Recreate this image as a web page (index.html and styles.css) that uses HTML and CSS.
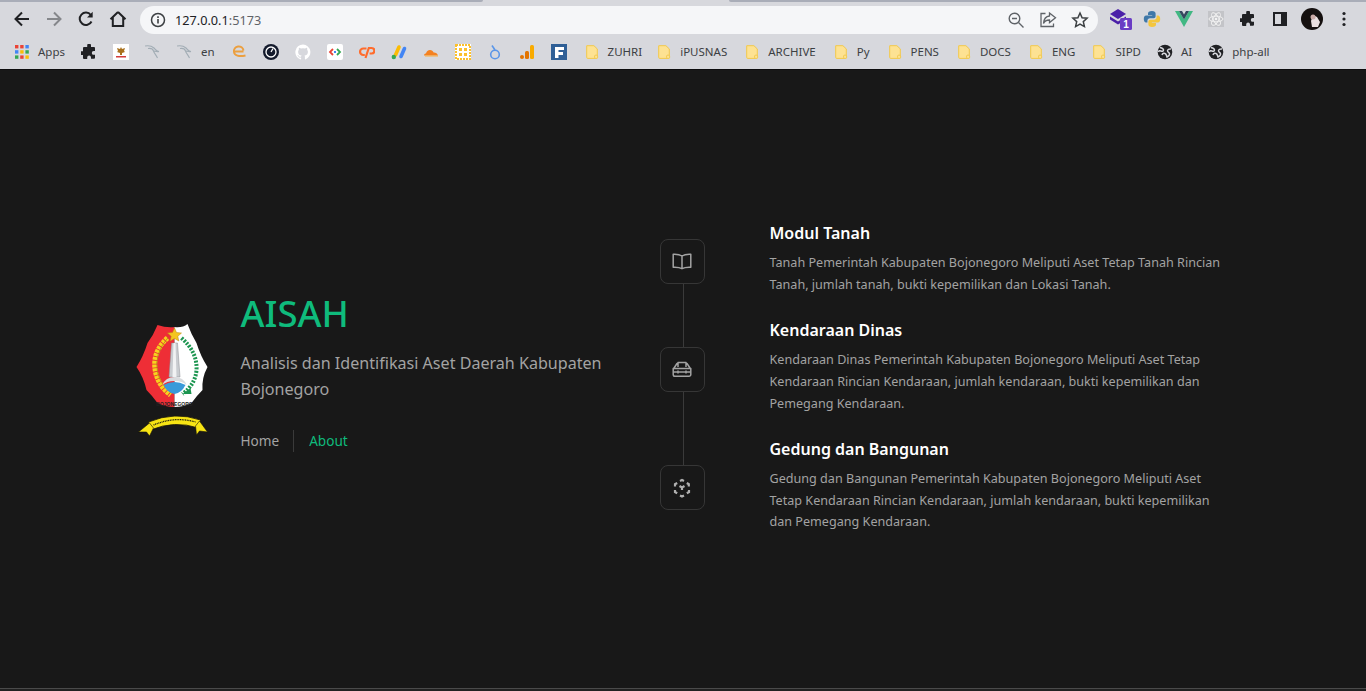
FILE: index.html
```html
<!DOCTYPE html>
<html lang="en">
<head>
  <meta charset="UTF-8">
  <title>AISAH</title>
  <link rel="stylesheet" href="styles.css">
</head>
<body>
  <svg class="defs" width="0" height="0">
    <symbol id="folder" viewBox="0 0 16 16">
      <path d="M2.7 1.7h7.2l3.4 3.200v8.500a1 1 0 0 1-1 1H3.700a1 1 0 0 1-1-1z" fill="#fde293" stroke="#f2c94c" stroke-width="1"/>
      <rect x="10.600" y="11.200" width="3" height="3.200" rx="1" fill="#fde293" stroke="#f2c94c"/>
    </symbol>
    <symbol id="globe" viewBox="0 0 16 16">
      <circle cx="8" cy="8" r="7.300" fill="#202124"/>
      <path d="M3 3.500c2 .5 3.500 1 3.500 2.500S5 7.500 4 7 1.800 6.500 1.500 8M14 5c-2-.3-3.500.5-3.500 1.800s1.500 1.500 2 2.700-1 3-2.500 3.500c-.5-1.500-.5-3-2-3.500s-2.500 0-3 1.500" fill="none" stroke="#d7d8dd" stroke-width="1.500"/>
    </symbol>
    <symbol id="kali" viewBox="0 0 16 16">
      <path d="M0 2c4-.8 7 .2 9 2 1.500 1.500 2 3.500 5 3.500M3 4.500c3-.5 5 .5 5.500 2.500.5 2 2 3 4 7M9 7c2 .5 3 1 5 .5" fill="none" stroke="#a2adb5" stroke-width="1.100"/>
    </symbol>
    <symbol id="puzzle" viewBox="0 0 16 16">
      <path d="M6.200 1.500a1.900 1.900 0 0 1 3.800 0V3h3a1 1 0 0 1 1 1v3h-1.300a1.900 1.900 0 0 0 0 3.800H14v3a1 1 0 0 1-1 1h-3v-1.300a1.900 1.900 0 0 0-3.800 0V15H3a1 1 0 0 1-1-1v-3H.7a1.900 1.900 0 0 1 0-3.800H2V4a1 1 0 0 1 1-1h3.200z" fill="#202124"/>
    </symbol>
  </svg>

  <div class="tabstrip">
    <span class="tab-gap tab-gap-left"></span>
    <span class="tab-active"></span>
    <span class="tab-gap tab-gap-right"></span>
  </div>

  <div class="toolbar">
    <div class="nav-buttons">
      <span class="tool">
        <svg width="18" height="18" viewBox="0 0 18 18"><path d="M16 9H3M9 2.500 2.500 9 9 15.500" fill="none" stroke="#202124" stroke-width="2"/></svg>
      </span>
      <span class="tool">
        <svg width="18" height="18" viewBox="0 0 18 18"><path d="M2 9h13M9 2.500 15.500 9 9 15.500" fill="none" stroke="#85878b" stroke-width="2"/></svg>
      </span>
      <span class="tool">
        <svg width="18" height="18" viewBox="0 0 18 18"><path d="M14.500 11.500A6.200 6.200 0 1 1 13.800 5" fill="none" stroke="#202124" stroke-width="2"/><path d="M15.700 1.800v5.700h-5.700z" fill="#202124"/></svg>
      </span>
      <span class="tool">
        <svg width="18" height="18" viewBox="0 0 18 18"><path d="M9 2 1.500 9.200M9 2l7.500 7.200M3.800 7.500V16h10.400V7.500" fill="none" stroke="#202124" stroke-width="2"/></svg>
      </span>
    </div>

    <div class="omnibox">
      <svg class="omni-info" width="16" height="16" viewBox="0 0 16 16"><circle cx="8" cy="8" r="6.500" fill="none" stroke="#3c4043" stroke-width="1.500"/><path d="M7.200 7h1.600v4.500H7.200zM7.200 4.300h1.600v1.600H7.200z" fill="#3c4043"/></svg>
      <span class="omni-url">127.0.0.1<span class="omni-port">:5173</span></span>
      <span class="omni-actions">
        <svg width="18" height="18" viewBox="0 0 18 18"><circle cx="7.500" cy="7.500" r="5.300" fill="none" stroke="#5f6368" stroke-width="1.400"/><path d="M5 7.500h5M11.500 11.500l5 5" fill="none" stroke="#5f6368" stroke-width="1.400"/></svg>
        <svg width="18" height="18" viewBox="0 0 18 18"><path d="M6.500 2.500H2v13h12.500v-3M10.500 2l6 4.800-6 4.800V9C7.500 9 5.500 10 4.500 12.500 4.800 8.500 7 5.300 10.500 5z" fill="none" stroke="#5f6368" stroke-width="1.300"/></svg>
        <svg width="18" height="18" viewBox="0 0 18 18"><path d="m9 2 2.100 4.700 5 .5-3.800 3.400 1.100 5L9 13l-4.400 2.600 1.100-5-3.800-3.400 5-.5z" fill="none" stroke="#3c4043" stroke-width="1.500"/></svg>
      </span>
    </div>

    <div class="extensions">
      <span class="tool">
        <svg class="ext-stack" width="24" height="24" viewBox="0 0 24 24">
          <path d="M8 2l8 5-8 5-8-5z" fill="#4a1fa8"/><path d="M0 9.500l8 5 8-5v3l-8 5-8-5z" fill="#4a1fa8"/>
          <rect x="10" y="11" width="12" height="12" rx="1.500" fill="#6a3cc4"/>
          <text x="16" y="21" class="ext-badge">1</text>
        </svg>
      </span>
      <span class="tool">
        <svg width="18" height="18" viewBox="0 0 18 18">
          <path d="M9 1C6 1 5 2 5 3.500V5h4.200v.6H3.200C1.500 5.600.8 7 .8 9s.9 3.400 2.200 3.400h1.400v-1.700C4.400 9.200 5.500 8.200 7 8.200h3.600c1.200 0 2-.9 2-2V3.500C12.600 2 11.400 1 9 1z" fill="#3f78a8"/>
          <path d="M9 17c3 0 4-1 4-2.500V13H8.800v-.6h6c1.700 0 2.400-1.400 2.400-3.400s-.9-3.400-2.200-3.400h-1.400v1.700c0 1.500-1.100 2.500-2.600 2.500H7.400c-1.200 0-2 .9-2 2v2.700C5.400 16 6.600 17 9 17z" fill="#f4c63d"/>
        </svg>
      </span>
      <span class="tool">
        <svg width="18" height="16" viewBox="0 0 18 16"><path d="M0 0h4l5 8.500L14 0h4L9 16z" fill="#41b883"/><path d="M4 0h3l2 3.500L11 0h3L9 8.500z" fill="#35495e"/></svg>
      </span>
      <span class="tool">
        <span class="ext-react">
          <svg width="16" height="16" viewBox="0 0 16 16"><g fill="none" stroke="#f3f3f3" stroke-width=".9"><ellipse cx="8" cy="8" rx="7" ry="2.800"/><ellipse cx="8" cy="8" rx="7" ry="2.800" transform="rotate(60 8 8)"/><ellipse cx="8" cy="8" rx="7" ry="2.800" transform="rotate(120 8 8)"/></g><circle cx="8" cy="8" r="1.300" fill="#f3f3f3"/></svg>
        </span>
      </span>
      <span class="tool"><svg width="16" height="16"><use href="#puzzle"/></svg></span>
      <span class="tool">
        <svg width="14" height="14" viewBox="0 0 14 14"><rect x="1" y="1" width="12" height="12" fill="none" stroke="#202124" stroke-width="2"/><rect x="8" y="1" width="5" height="12" fill="#202124"/></svg>
      </span>
      <span class="tool">
        <span class="avatar">
          <svg width="22" height="22" viewBox="0 0 22 22"><path d="M12 7l4 2 3 5-2 5h-6l-1-6z" fill="#e9dfe0"/><circle cx="12" cy="9" r="2.500" fill="#c9a9a5"/></svg>
        </span>
      </span>
      <span class="tool">
        <svg width="4" height="16" viewBox="0 0 4 16"><circle cx="2" cy="2.500" r="1.600" fill="#202124"/><circle cx="2" cy="8" r="1.600" fill="#202124"/><circle cx="2" cy="13.500" r="1.600" fill="#202124"/></svg>
      </span>
    </div>
  </div>

  <div class="bookmarks">
    <a class="bm bm-apps">
      <svg width="14" height="14" viewBox="0 0 14 14">
        <g fill="#ea4335"><rect width="3.400" height="3.400"/><rect x="5.200" width="3.400" height="3.400"/></g>
        <rect x="10.400" width="3.400" height="3.400" fill="#4285f4"/>
        <rect y="5.200" width="3.400" height="3.400" fill="#4285f4"/><rect x="5.200" y="5.200" width="3.400" height="3.400" fill="#fbbc04"/><rect x="10.400" y="5.200" width="3.400" height="3.400" fill="#34a853"/>
        <rect y="10.400" width="3.400" height="3.400" fill="#34a853"/><rect x="5.200" y="10.400" width="3.400" height="3.400" fill="#ea4335"/><rect x="10.400" y="10.400" width="3.400" height="3.400" fill="#fbbc04"/>
      </svg>
      <span>Apps</span>
    </a>
    <a class="bm"><svg width="16" height="16"><use href="#puzzle"/></svg></a>
    <a class="bm">
      <svg width="16" height="16" viewBox="0 0 16 16"><rect width="16" height="16" fill="#fff"/><path d="M8 3l1 2 3-1-1 3 1 1-3 1v2H7V9L4 8l1-1-1-3 3 1z" fill="#a8701c"/><rect x="3" y="12" width="10" height="1.500" fill="#d33b3b"/></svg>
    </a>
    <a class="bm"><svg width="16" height="16"><use href="#kali"/></svg></a>
    <a class="bm"><svg width="16" height="16"><use href="#kali"/></svg><span>en</span></a>
    <a class="bm">
      <svg width="16" height="16" viewBox="0 0 16 16"><path d="M3 7.500h9.500M3 8a4.500 4.500 0 0 1 9.500-1.500M3 8c.3 3.500 5 5 11.500 3.500" fill="none" stroke="#eb9f3f" stroke-width="2"/></svg>
    </a>
    <a class="bm">
      <svg width="16" height="16" viewBox="0 0 16 16"><circle cx="8" cy="8" r="8" fill="#131a2c"/><circle cx="8" cy="8" r="5" fill="none" stroke="#fff" stroke-width="1.300"/><path d="M8 8l2-3.500" stroke="#fff" stroke-width="1.300"/></svg>
    </a>
    <a class="bm">
      <svg width="16" height="16" viewBox="0 0 16 16"><path d="M8 .5a7.700 7.700 0 0 0-2.400 15c.4 0 .5-.2.500-.4v-1.500c-2.100.5-2.600-.9-2.600-.9-.3-.9-.8-1.100-.8-1.100-.7-.5 0-.5 0-.5.800 0 1.200.8 1.200.8.700 1.200 1.800.9 2.200.7 0-.5.300-.9.500-1.100-1.700-.2-3.500-.9-3.500-3.800 0-.8.300-1.500.8-2-.1-.2-.3-1 .1-2 0 0 .6-.2 2.100.8a7 7 0 0 1 3.800 0c1.500-1 2.100-.8 2.100-.8.400 1 .2 1.800.1 2 .5.500.8 1.200.8 2 0 2.900-1.800 3.600-3.500 3.800.3.200.5.700.5 1.400v2.100c0 .2.100.5.500.4A7.700 7.700 0 0 0 8 .5z" fill="#fff"/></svg>
    </a>
    <a class="bm">
      <svg width="16" height="16" viewBox="0 0 16 16"><rect width="16" height="16" rx="2" fill="#fff"/><path d="M6 5 3 8l3 3" fill="none" stroke="#ea4335" stroke-width="1.800"/><path d="m10 5 3 3-3 3" fill="none" stroke="#34a853" stroke-width="1.800"/><path d="M7 8h2" stroke="#4285f4" stroke-width="1.800"/></svg>
    </a>
    <a class="bm">
      <svg width="16" height="16" viewBox="0 0 16 16" fill="none" stroke="#ff6c2c" stroke-width="2.200"><path d="M7.500 4.500H4.300a3 3 0 0 0 0 6.500h1.500"/><path d="M6.500 14 9.800 4h2.800a2.700 2.700 0 0 1 0 5.500h-2"/></svg>
    </a>
    <a class="bm">
      <svg width="16" height="16" viewBox="0 0 16 16" stroke-width="3.600" stroke-linecap="round"><path d="M8 3 4.500 11" stroke="#fbbc04"/><path d="M13.500 4.500 10 12.500" stroke="#4285f4"/><circle cx="2.800" cy="13" r="2.200" fill="#34a853" stroke="none"/></svg>
    </a>
    <a class="bm">
      <svg width="16" height="16" viewBox="0 0 16 16"><path d="M1 11.500c0-1.500 1-2 2-2 .5-2 2-3.500 4-3.500 1.800 0 3 1 3.600 2.500 1.800-.2 3.900.8 4.400 3z" fill="#f48120"/><path d="M2 12h13" stroke="#fbad41" stroke-width="1"/></svg>
    </a>
    <a class="bm">
      <svg width="16" height="16" viewBox="0 0 16 16"><rect width="16" height="16" fill="#fff"/><rect x="1" y="1" width="14" height="14" fill="none" stroke="#fbc02d" stroke-width="2" stroke-dasharray="2 1"/><path d="M4 4h3v3H4zM9 4h3v3H9zM4 9h3v3H4zM9 9h3v3H9z" fill="#fbc02d"/></svg>
    </a>
    <a class="bm">
      <svg width="16" height="16" viewBox="0 0 16 16"><circle cx="8" cy="10.500" r="4.300" fill="none" stroke="#5b96e8" stroke-width="1.600"/><path d="M5 1.500l3 4.500" stroke="#5b96e8" stroke-width="1.600" fill="none"/></svg>
    </a>
    <a class="bm">
      <svg width="16" height="16" viewBox="0 0 16 16"><rect x="11" y="1" width="4" height="14" rx="1.500" fill="#f9ab00"/><rect x="6" y="7" width="4" height="8" rx="1.500" fill="#e37400"/><circle cx="3" cy="13" r="2" fill="#e37400"/></svg>
    </a>
    <a class="bm">
      <svg width="16" height="16" viewBox="0 0 16 16"><rect width="16" height="16" fill="#2f5f96"/><path d="M4 3h9v3H7.500v2H12v3H7.500v3H4z" fill="#fff"/></svg>
    </a>
    <a class="bm bm-folder bm-folder-first"><svg width="16" height="16"><use href="#folder"/></svg><span>ZUHRI</span></a>
    <a class="bm bm-folder"><svg width="16" height="16"><use href="#folder"/></svg><span>iPUSNAS</span></a>
    <a class="bm bm-folder"><svg width="16" height="16"><use href="#folder"/></svg><span>ARCHIVE</span></a>
    <a class="bm bm-folder"><svg width="16" height="16"><use href="#folder"/></svg><span>Py</span></a>
    <a class="bm bm-folder"><svg width="16" height="16"><use href="#folder"/></svg><span>PENS</span></a>
    <a class="bm bm-folder"><svg width="16" height="16"><use href="#folder"/></svg><span>DOCS</span></a>
    <a class="bm bm-folder bm-folder-eng"><svg width="16" height="16"><use href="#folder"/></svg><span>ENG</span></a>
    <a class="bm bm-folder bm-folder-last"><svg width="16" height="16"><use href="#folder"/></svg><span>SIPD</span></a>
    <a class="bm"><svg width="16" height="16"><use href="#globe"/></svg><span>AI</span></a>
    <a class="bm"><svg width="16" height="16"><use href="#globe"/></svg><span>php-all</span></a>
  </div>

  <main class="page">
    <div class="content">
      <section class="intro">
        <svg class="logo" width="73" height="115" viewBox="12 12 72 115">
          <path d="M33 15Q42 18 50 17V97Q41 97 33 93Q28 86 22 80Q19 67 12 57Q19 46 23 33Q29 25 33 15z" fill="#ee2e36"/>
          <path d="M50 17Q58 18 63 14Q67 25 72 33Q76 46 83 57Q77 68 78 80Q72 86 67 93Q59 97 50 97z" fill="#fff"/>
          <path d="M43 28Q27 42 31 62Q34 76 46 85" fill="none" stroke="#f7d21e" stroke-width="5" stroke-dasharray="3 .8"/>
          <path d="M44 27Q29 44 33 62Q36 75 47 83" fill="none" stroke="#a87d12" stroke-width=".7"/>
          <path d="M57 28Q73 42 72 60Q71 74 58 84" fill="none" stroke="#1c9550" stroke-width="4" stroke-dasharray="2 1.400"/>
          <path d="M50 18l2 4.500 5 .5-3.700 3.300 1 4.700-4.300-2.500-4.300 2.500 1-4.700-3.700-3.300 5-.5z" fill="#f4c51f" stroke="#b78a14" stroke-width=".5"/>
          <path d="M47 33h6l2.500 34h-11z" fill="#c9ccd0" stroke="#8a8d92" stroke-width=".5"/>
          <path d="M49 33h2l1 34h-4z" fill="#f1f2f3"/>
          <path d="M38 75Q41 67 50 67Q59 67 62 75Q58 71 50 71Q42 71 38 75z" fill="#d9dbde"/>
          <path d="M39 75Q50 69 61 75Q57 83 50 84Q43 83 39 75z" fill="#3a9ad9"/>
          <path d="M58 84l8-6 1 6z" fill="#1c9550"/>
          <text x="50" y="96" class="logo-name">BOJONEGORO</text>
          <path d="M24 112Q50 101 76 110L74 118Q50 110 26 120z" fill="#f7e414" stroke="#16130a" stroke-width=".8"/>
          <path d="M25 113L14 122 22 122 25 126 29 118zM75 111L83 122 75 121 72 125 71 116z" fill="#f7e414" stroke="#16130a" stroke-width=".6"/>
          <path d="M29 115Q50 106 71 112" fill="none" stroke="#1b1a10" stroke-width="1.300" stroke-dasharray="1 .7"/>
        </svg>
        <div class="intro-text">
          <h1 class="brand">AISAH</h1>
          <p class="tagline">Analisis dan Identifikasi Aset Daerah Kabupaten Bojonegoro</p>
          <nav class="links">
            <a class="link">Home</a>
            <a class="link link-active">About</a>
          </nav>
        </div>
      </section>

      <section class="features">
        <article class="feature">
          <span class="feature-icon">
            <svg width="22" height="22" viewBox="0 0 22 22" fill="none" stroke="#a3a3a3" stroke-width="1.500" stroke-linejoin="round"><path d="M11 6C9 4.600 6 4 2.200 4.200v13C6 17 9 17.500 11 18.700c2-1.200 5-1.700 8.800-1.500v-13C16 4 13 4.600 11 6zM11 6v12.700"/></svg>
          </span>
          <div class="feature-body">
            <h2>Modul Tanah</h2>
            <p>Tanah Pemerintah Kabupaten Bojonegoro Meliputi Aset Tetap Tanah Rincian Tanah, jumlah tanah, bukti kepemilikan dan Lokasi Tanah.</p>
          </div>
        </article>
        <article class="feature">
          <span class="feature-icon">
            <svg width="22" height="22" viewBox="0 0 22 22" fill="none" stroke="#a3a3a3" stroke-width="1.500" stroke-linejoin="round"><path d="M7 9V4.500h8V9M7 5.500H6L2.700 10.500M15 5.500h1l3.300 5M2.200 10.500h17.600v6a1.800 1.800 0 0 1-1.800 1.800H4a1.800 1.800 0 0 1-1.800-1.800zM2.500 14h17M7 12.500v3M15 12.500v3"/></svg>
          </span>
          <div class="feature-body">
            <h2>Kendaraan Dinas</h2>
            <p>Kendaraan Dinas Pemerintah Kabupaten Bojonegoro Meliputi Aset Tetap Kendaraan Rincian Kendaraan, jumlah kendaraan, bukti kepemilikan dan Pemegang Kendaraan.</p>
          </div>
        </article>
        <article class="feature">
          <span class="feature-icon">
            <svg width="20" height="20" viewBox="0 0 20 20" fill="none" stroke="#b0b0b0" stroke-width="2.200"><path d="M8 3l2-1 2 1M14.800 5l2 1.200v2.300M17 12v2l-2.200 1.200M12 17.500l-2 1-2-1M5.200 15.200 3 14v-2M3 8.500V6.200L5.200 5M7.500 8l2.500 1.500L12.500 8M10 9.500V12"/></svg>
          </span>
          <div class="feature-body">
            <h2>Gedung dan Bangunan</h2>
            <p>Gedung dan Bangunan Pemerintah Kabupaten Bojonegoro Meliputi Aset Tetap Kendaraan Rincian Kendaraan, jumlah kendaraan, bukti kepemilikan dan Pemegang Kendaraan.</p>
          </div>
        </article>
      </section>
    </div>
  </main>
  <div class="page-end"></div>
</body>
</html>
```

FILE: styles.css
```css
* {
  box-sizing: border-box;
}

html, body {
  height: 100%;
  margin: 0;
  overflow: hidden;
}

body {
  display: flex;
  flex-direction: column;
  font-family: "Noto Sans", "Open Sans", sans-serif;
  background-color: #181818;
}

.defs {
  position: absolute;
}

/* browser chrome */
.tabstrip {
  display: flex;
  flex-shrink: 0;
  height: 2px;
  background-color: #d7d8dd;
}

.tab-gap {
  background-color: #a9adb8;
}

.tab-gap-left {
  width: 483px;
  border-bottom-right-radius: 2px;
}

.tab-active {
  width: 246px;
}

.tab-gap-right {
  flex: 1;
  border-bottom-left-radius: 2px;
}

.toolbar {
  display: flex;
  flex-shrink: 0;
  align-items: center;
  height: 33px;
  padding: 0 6px;
  background-color: #d7d8dd;
}

.nav-buttons,
.extensions {
  display: flex;
  align-items: center;
}

.extensions {
  margin-left: 6px;
}

.tool {
  display: flex;
  align-items: center;
  justify-content: center;
  width: 32px;
  height: 28px;
}

.ext-stack {
  margin-left: 4px;
}

.ext-badge {
  font: bold 10px "Liberation Sans", sans-serif;
  fill: #fff;
  text-anchor: middle;
}

.ext-react {
  display: flex;
  align-items: center;
  justify-content: center;
  width: 16px;
  height: 16px;
  background-color: #c3c4c8;
}

.avatar {
  display: block;
  width: 22px;
  height: 22px;
  border-radius: 50%;
  background-color: #15100f;
  overflow: hidden;
}

.omnibox {
  display: flex;
  align-items: center;
  flex: 1;
  height: 28px;
  margin-left: 6px;
  margin-top: 2px;
  padding-left: 10px;
  border-radius: 14px;
  background-color: #f5f6f8;
}

.omni-url {
  margin-left: 9px;
  font-size: 12.7px;
  color: #202124;
}

.omni-port {
  color: #5f6368;
}

.omni-actions {
  display: flex;
  gap: 14px;
  margin-left: auto;
  padding-right: 9px;
}

.bookmarks {
  display: flex;
  flex-shrink: 0;
  align-items: center;
  height: 35px;
  padding-left: 7px;
  padding-bottom: 1px;
  background-color: #d7d8dd;
  border-bottom: 1px solid #0d0d0e;
}

.bm {
  display: flex;
  align-items: center;
  gap: 8px;
  padding: 0 8px;
  font-size: 11.5px;
  color: #3c4043;
  white-space: nowrap;
}

.bm-apps {
  gap: 9px;
}

.bm-folder {
  padding-left: 8px;
  padding-right: 9px;
}

.bm-folder-first {
  margin-left: 1px;
  margin-right: -3px;
}

.bm-folder-eng {
  margin-right: -1px;
}

.bm-folder-last {
  margin-right: -1px;
}

/* page */
.page {
  display: flex;
  flex-shrink: 0;
  align-items: center;
  height: 618px;
  background-color: #181818;
}

.page-end {
  flex: 1;
  background-color: #212121;
  border-top: 1px solid #4a4a4a;
}

.content {
  display: flex;
  width: 1093px;
  margin: 0 auto;
  align-items: center;
}

.intro {
  display: flex;
  align-items: center;
  gap: 31px;
  width: 523px;
  flex-shrink: 0;
  margin-top: -13px;
  margin-left: -1px;
}

.logo {
  flex-shrink: 0;
  margin-top: 13px;
}

.logo-name {
  font: bold 5px "Liberation Sans", sans-serif;
  fill: #222;
  text-anchor: middle;
}

.intro-text {
  width: 380px;
  margin-left: 1px;
}

.brand {
  margin: 0;
  font-size: 36.6px;
  line-height: 40px;
  font-weight: 500;
  color: #0fbb7c;
}

.tagline {
  margin: 17px 0 0;
  font-size: 16.1px;
  line-height: 26px;
  color: #a3a3a3;
}

.links {
  display: flex;
  margin-top: 28px;
}

.link {
  padding: 1px 14px 1px 0;
  font-size: 13.6px;
  line-height: 20px;
  color: #a3a3a3;
}

.link-active {
  padding-left: 15px;
  border-left: 1px solid #3a3a3a;
  color: #0fbb7c;
}

.features {
  position: relative;
  display: flex;
  flex-direction: column;
  gap: 23px;
  flex: 1;
  margin-top: -4px;
  margin-left: 1px;
}

.features::before {
  content: "";
  position: absolute;
  left: 23px;
  top: 40px;
  bottom: 40px;
  width: 1px;
  background-color: #3a3a3a;
}

.feature {
  position: relative;
  display: flex;
  align-items: center;
  gap: 65px;
}

.feature-icon {
  display: flex;
  align-items: center;
  justify-content: center;
  flex-shrink: 0;
  width: 45px;
  height: 45px;
  margin-top: 6px;
  border: 1px solid #363636;
  border-radius: 8px;
  background-color: #181818;
}

.feature-body h2 {
  margin: 0 0 7px;
  font-size: 16px;
  line-height: 24px;
  font-weight: 600;
  color: #fff;
}

.feature-body p {
  margin: 0;
  font-size: 12.6px;
  line-height: 21.6px;
  color: #a3a3a3;
}
```
